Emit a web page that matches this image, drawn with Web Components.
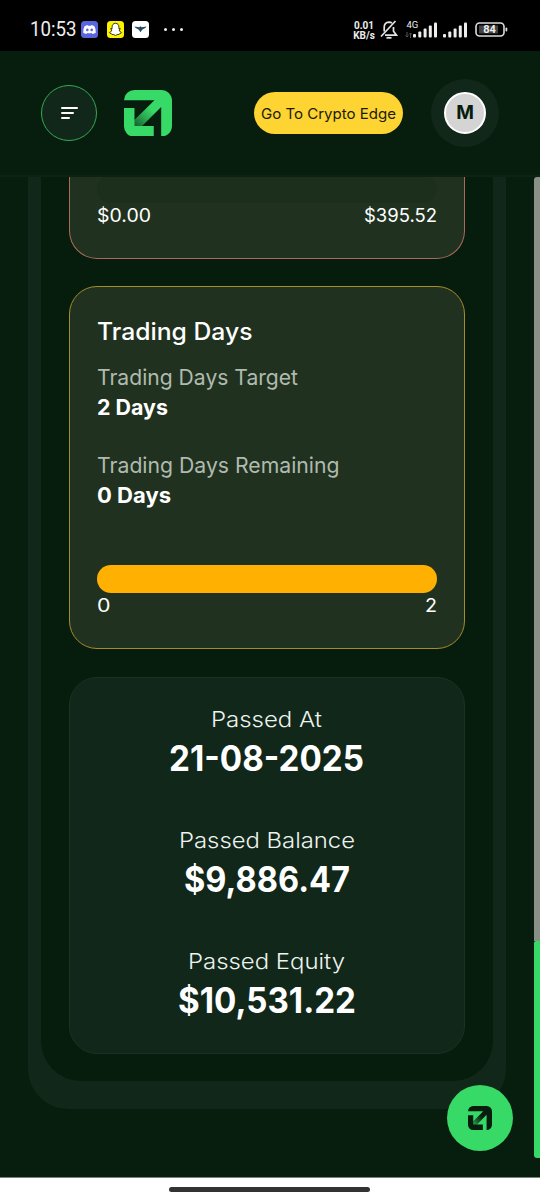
<!DOCTYPE html>
<html lang="en">
<head>
<meta charset="utf-8">
<title>Trading Days</title>
<style>
html,body{margin:0;padding:0;background:#071d0e}
body{width:540px;height:1200px;overflow:hidden;font-family:Inter,"Liberation Sans",sans-serif;color:#fff}
</style>
</head>
<body>
<phone-screen></phone-screen>
<script>
const define=(name,html,setup)=>customElements.define(name,class extends HTMLElement{
  constructor(){super();this.attachShadow({mode:'open'}).innerHTML=html;}
  connectedCallback(){if(setup)setup(this,this.shadowRoot);}
});

/* A single line of text stretched to fill the width given in "w". */
define('fit-text',`<style>:host{display:block;white-space:nowrap}span{display:inline-block;transform-origin:0 50%}</style><span></span>`,(el,root)=>{
  const s=root.querySelector('span'),w=+el.getAttribute('w');
  s.textContent=el.getAttribute('text')||'';
  if(!w)return;
  const n=s.getBoundingClientRect().width;
  el.style.width=w+'px';
  if(n)s.style.transform='scaleX('+w/n+')';
});

define('edge-logo',`<style>:host{display:block;color:#37d967;--fade:#0b2f19}svg{display:block;width:100%;height:100%}</style>
<svg viewBox="0 0 142 140" preserveAspectRatio="none"><defs><linearGradient id="g" gradientUnits="userSpaceOnUse" x1="36" y1="106" x2="90" y2="50"><stop offset="0" style="stop-color:var(--fade);stop-opacity:.68"/><stop offset=".45" style="stop-color:var(--fade);stop-opacity:.28"/><stop offset=".85" style="stop-color:var(--fade);stop-opacity:0"/></linearGradient></defs>
<path fill="currentColor" d="M0 31A31 31 0 0 1 31 0H110A32 32 0 0 1 142 32V108A32 32 0 0 1 110 140V51L53 108H88V140H30A30 30 0 0 1 0 110V54H31V90L90 31Z"/>
<path fill="url(#g)" d="M31 90L90 31L110 51L53 108H31Z"/></svg>`);

define('signal-bars',`<style>:host{display:block;width:25px;height:16px}svg{display:block}</style>
<svg width="25" height="16" fill="#eee"><rect x="0" y="12" width="3" height="3.5" rx="1"/><rect x="5.3" y="9.5" width="3" height="6" rx="1"/><rect x="10.600" y="6.500" width="3" height="9" rx="1"/><rect x="15.800" y="3.500" width="3" height="12" rx="1"/><rect x="21" y=".5" width="3" height="15" rx="1"/></svg>`);

define('status-bar',`<style>
:host{display:flex;box-sizing:border-box;height:51px;background:#000;color:#eee;padding:8px 32px 0 30px;align-items:center;font-family:Roboto,sans-serif}
svg{display:block;flex:none}.time{font-size:19.500px;line-height:24px;width:51px;padding-top:1px}
.a{margin-right:8.500px}.grow{flex:1}
.net{font-size:10px;font-weight:700;line-height:10px;text-align:center;width:22px;padding-top:2px}
.bell{margin:0 15px 0 5px}.cell{position:relative;margin-right:5px}.g{position:absolute;left:-6.500px;top:-2px;font-size:9.500px;line-height:9px}
.ar{position:absolute;left:-8px;top:10px}
.bat{margin-left:7px;position:relative}.bat span{position:absolute;left:0;top:0;width:29px;line-height:15px;text-align:center;font-size:11px;font-weight:700}
</style>
<div class="time"><fit-text text="10:53" w="46.5"></fit-text></div>
<svg class="a" width="17" height="17" viewBox="0 0 17 17"><rect width="17" height="17" rx="3.500" fill="#5966dd"/><path fill="#fff" d="M3.600 5.200Q5 4.300 6.500 4L7 4.800H10L10.500 4Q12 4.300 13.400 5.200Q15.200 8.400 14.800 11.700Q13.300 12.800 11.500 13L10.700 11.900Q8.500 12.500 6.300 11.900L5.500 13Q3.700 12.800 2.200 11.700Q1.800 8.400 3.600 5.200Z"/><circle cx="6.300" cy="8.900" r="1.300" fill="#5966dd"/><circle cx="10.700" cy="8.900" r="1.300" fill="#5966dd"/></svg>
<svg class="a" width="17" height="17" viewBox="0 0 17 17"><rect width="17" height="17" rx="3.500" fill="#fbf300"/><path fill="#fff" stroke="#292900" stroke-width=".9" stroke-linejoin="round" d="M8.500 2.300C6.200 2.300 5 4 5.100 6.200V7.700L3.700 7.500Q3.400 8.400 4.900 8.900Q4.400 11 2.500 11.600Q2.700 12.400 4.500 12.700L5 13.500Q6.300 13.200 7 13.800Q8.500 15 10 13.800Q10.700 13.200 12 13.500L12.500 12.700Q14.300 12.400 14.500 11.600Q12.600 11 12.100 8.900Q13.600 8.400 13.300 7.500L11.900 7.700V6.200C12 4 10.800 2.300 8.500 2.300Z"/></svg>
<svg width="17" height="17" viewBox="0 0 17 17"><rect width="17" height="17" rx="3.500" fill="#fff"/><path fill="#264b63" d="M2.500 5.400L7.200 6.200L8.500 5.300L9.800 6.200L14.500 5.400Q13.800 7 11.300 8L10 9L8.500 11.200L7 9L5.700 8Q3.200 7 2.500 5.400Z"/></svg>
<svg style="margin-left:13.500px" width="22" height="6" fill="#eee"><circle cx="2.500" cy="2.500" r="1.500"/><circle cx="10.500" cy="2.500" r="1.500"/><circle cx="18.500" cy="2.500" r="1.500"/></svg>
<div class="grow"></div>
<div class="net"><div>0.01</div><div>KB/s</div></div>
<svg class="bell" width="18" height="20" viewBox="0 0 18 20" fill="none" stroke="#e4e4e4" stroke-width="1.700"><path d="M4.200 11.500V7.500Q4.200 2.500 9 2.200Q10.800 2.200 12 3.200M13.500 7V11.300L16.500 15.200H5"/><path d="M1 16.500L15.500 1"/><path d="M6.500 17.800H11.500" stroke-width="1.800"/></svg>
<div class="cell"><span class="g">4G</span><svg class="ar" width="7" height="6" stroke="#555" fill="none"><path d="M2 0V5M.5 3.500L2 5L3.500 3.500M5.500 6V1M4 2.500L5.500 1L7 2.500"/></svg><signal-bars></signal-bars></div>
<signal-bars></signal-bars>
<div class="bat"><svg width="33" height="15"><rect x="1" y="1" width="28" height="13" rx="3.500" fill="none" stroke="#ddd" stroke-width="1.600"/><rect x="4" y="3.500" width="19" height="8" fill="#444"/><rect x="30.500" y="5.500" width="1.800" height="4" rx=".9" fill="#ddd"/></svg><span>84</span></div>`);

define('app-header',`<style>
:host{display:flex;box-sizing:border-box;height:126px;padding:0 41px;align-items:center;background:#071d0e;border-bottom:2px solid #0c2213}
.menu{box-sizing:border-box;width:56px;height:56px;border:1px solid #34a954;border-radius:50%;background:#11271a;display:flex;flex-direction:column;gap:3.300px;justify-content:center;padding-left:19px}
.menu i{height:2px;border-radius:1px;background:#fff}
edge-logo{width:48px;height:46.600px;margin-left:27px}
.go{margin-left:auto;width:149px;height:42px;border-radius:21px;background:#fdd431;color:#1b1b0b;display:flex;align-items:center;justify-content:center;font-size:14.400px}
.av{margin:0 0 0 28px;width:68px;height:68px;border-radius:50%;background:#11271a;display:flex;align-items:center;justify-content:center}
.av div{box-sizing:border-box;width:42px;height:42px;border:2px solid #fff;border-radius:50%;background:#d4d4d4;color:#071d0e;font-weight:700;font-size:19px;line-height:38px;text-align:center}
</style><div class="menu"><i style="width:17px"></i><i style="width:13px"></i><i style="width:8.500px"></i></div><edge-logo></edge-logo>
<div class="go"><fit-text text="Go To Crypto Edge" w="135"></fit-text></div><div class="av"><div>M</div></div>`);
/* The avatar's halo reaches 41px from the right edge, in line with the menu button. */

define('stat-card',`<style>
:host{display:flex;flex-direction:column;box-sizing:border-box;width:396px;border:1px solid var(--line);border-radius:28px;background:var(--fill);padding:28px 27.500px 28px 27px;margin-bottom:27px}
</style><slot></slot>`);

define('range-bar',`<style>:host{display:block}.bar{height:28px;border-radius:14px;background:var(--bar)}
.row{display:flex;justify-content:space-between;font-size:18.500px;line-height:24px;font-weight:400}</style>
<div class="bar"></div><div class="row"></div>`,(el,root)=>{
  root.querySelector('.row').innerHTML=['from','to'].map(k=>`<fit-text text="${el.getAttribute(k)}" w="${el.getAttribute(k+'-w')}"></fit-text>`).join('');
});

define('labelled-value',`<style>:host{display:block}
.l{font-size:21.500px;line-height:30px;color:#b0baaf;font-weight:400}.v{font-size:21.500px;line-height:30px;font-weight:700}
:host([big]){display:flex;flex-direction:column;align-items:center}
:host([big]) .l{font-size:22px;color:#edf3ee;font-weight:350}:host([big]) .v{font-size:35px;line-height:49px}
</style><div class="box"></div>`,(el,root)=>{
  root.querySelector('.box').replaceWith(...[['l','label'],['v','value']].map(([c,k])=>{
    const f=document.createElement('fit-text');
    f.className=c;f.setAttribute('text',el.getAttribute(k));f.setAttribute('w',el.getAttribute(k+'-w'));
    return f;
  }));
});

define('page-scroll',`<style>:host{display:flex;flex-direction:column;width:6px;height:981px}
.t{height:764px;background:#8a8f88;border-radius:3px 0 0 0}.g{flex:1;background:#37d967;border-radius:2px 0 0 3px}</style><div class="t"></div><div class="g"></div>`);

define('chat-button',`<style>:host{display:flex;align-items:center;justify-content:center;width:66px;height:66px;border-radius:50%;background:#37d967}
edge-logo{width:24px;height:24px;color:#071d0e;--fade:#37d967}</style><edge-logo></edge-logo>`);

define('phone-screen',`<style>
:host{display:flex;flex-direction:column;width:540px;height:1200px;position:relative;overflow:hidden;background:#071d0e}
main{display:flex;justify-content:space-between;height:1000px;overflow:hidden}
.outer{box-sizing:border-box;width:478px;height:932px;margin-left:28px;padding:0 13px 28px;background:#11271a;border-radius:0 0 40px 40px}
.inner{box-sizing:border-box;height:904px;background:#061c0c;border-radius:0 0 40px 40px;padding:0 28px}
.red{--line:#a86a5a;--fill:#20321f;--bar:#1b2f1c;border-top:0;border-radius:0 0 28px 28px;padding:0 27.500px 0 27px;height:82px}
.red range-bar{margin-top:-2px}
.gold{--line:#a58b2a;--fill:#20321f;--bar:#ffb000;height:363px;margin-bottom:28px}
h2{margin:0 0 14px;font-size:24px;line-height:33px;font-weight:550}
.gap{margin-top:28px}.gold range-bar{margin-top:55px}
.pass{--line:#1c3124;--fill:#11271a;height:377px;padding-top:26px;margin:0}
.pass .n{margin-top:42px}
chat-button{position:absolute;left:447px;top:1084.500px}
footer{box-sizing:border-box;height:23px;background:#fff;border-top:1px solid #788578;display:flex;justify-content:center;padding:9px 1px 0 0}
footer div{width:201px;height:5px;border-radius:3px;background:#333}
</style>
<status-bar></status-bar><app-header></app-header>
<main><div class="outer"><div class="inner">
<stat-card class="red"><range-bar from="$0.00" from-w="54" to="$395.52" to-w="73"></range-bar></stat-card>
<stat-card class="gold"><h2><fit-text text="Trading Days" w="155.5"></fit-text></h2>
<labelled-value label="Trading Days Target" label-w="201" value="2 Days" value-w="71"></labelled-value>
<labelled-value class="gap" label="Trading Days Remaining" label-w="242.5" value="0 Days" value-w="74"></labelled-value>
<range-bar from="0" from-w="13.5" to="2" to-w="12"></range-bar></stat-card>
<stat-card class="pass">
<labelled-value big label="Passed At" label-w="111" value="21-08-2025" value-w="195"></labelled-value>
<labelled-value big class="n" label="Passed Balance" label-w="176" value="$9,886.47" value-w="166"></labelled-value>
<labelled-value big class="n" label="Passed Equity" label-w="157" value="$10,531.22" value-w="178"></labelled-value>
</stat-card></div></div><page-scroll></page-scroll></main>
<footer><div></div></footer><chat-button></chat-button>`);
</script>
</body>
</html>
